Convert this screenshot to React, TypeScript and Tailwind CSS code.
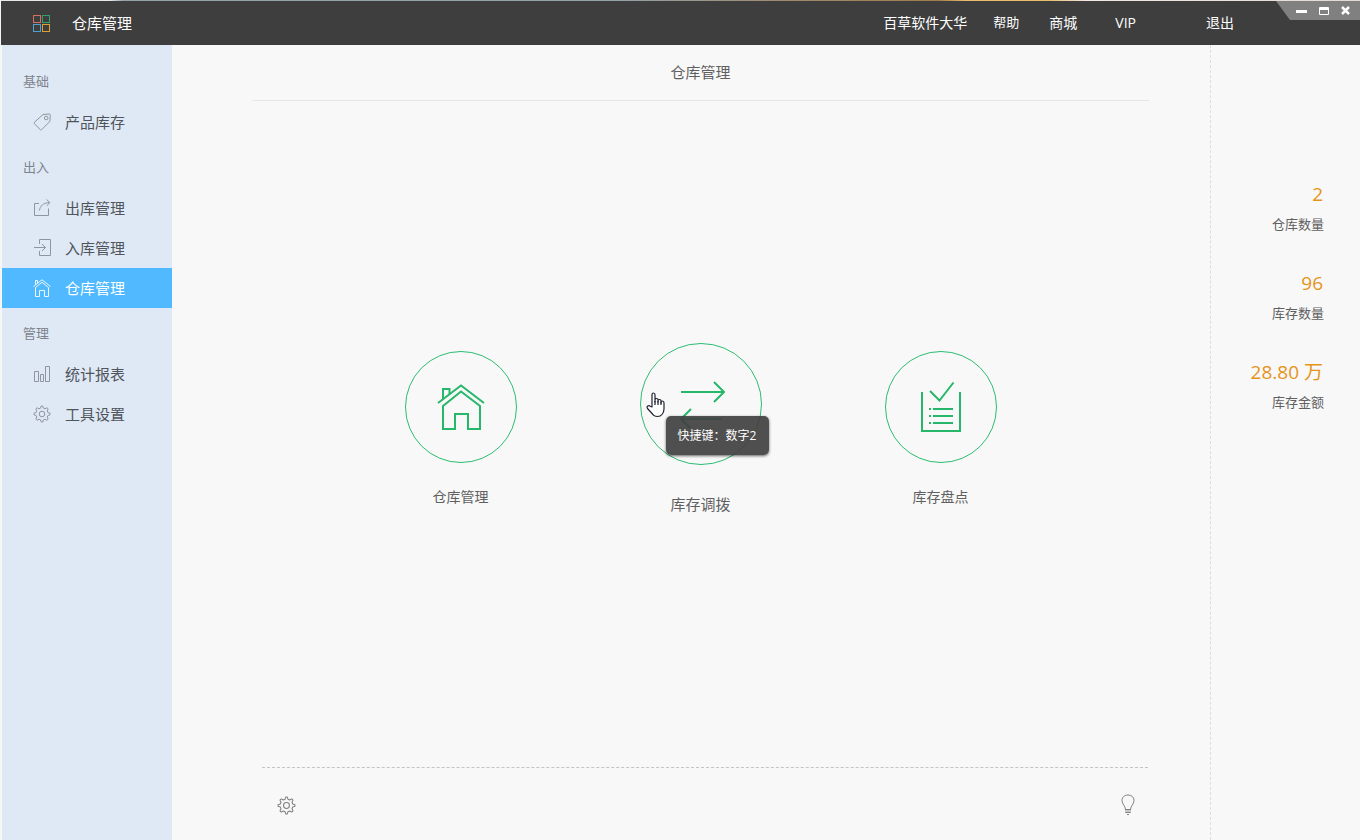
import React from 'react';

type IconProps = { className?: string };

const GEAR_PATH =
  'M8.2 1h1.6l.6 2.1 1.6.7 1.9-1.1 1.3 1.2-1 2 .7 1.6 2.1.7v1.6l-2.1.7-.7 1.6 1 2-1.3 1.2-1.9-1.1-1.6.7-.6 2.1H8.2l-.6-2.1-1.6-.7-1.9 1.1-1.3-1.2 1-2-.7-1.6L1 9.8V8.2l2.1-.7.7-1.6-1-2L4.1 2.7 6 3.8l1.6-.7z';

function TagIcon({ className }: IconProps) {
  return (
    <svg viewBox="0 0 18 18" fill="none" stroke="currentColor" className={className}>
      <path d="M10 1.5L16 1Q17.3 1 17.3 2.2L16.8 8.5 8.5 16.8Q8 17.2 7.5 16.8L1.2 10.5Q.8 10 1.2 9.5z" />
      <circle cx="13.2" cy="5" r="1.8" />
    </svg>
  );
}

function ExportIcon({ className }: IconProps) {
  return (
    <svg viewBox="0 0 18 18" fill="none" stroke="currentColor" className={className}>
      <path d="M6 4.5H1.5v12h14v-7" />
      <path d="M6.5 11.5C7 7 10 4 16.5 3.5M13.5.5l3.3 3L14 6.8" />
    </svg>
  );
}

function ImportIcon({ className }: IconProps) {
  return (
    <svg viewBox="0 0 18 18" fill="none" stroke="currentColor" className={className}>
      <path d="M6.5 5V.5h11v16h-11V12" />
      <path d="M1 8.5h11.5M9 5l3.5 3.5L9 12" />
    </svg>
  );
}

function SmallHouseIcon({ className }: IconProps) {
  return (
    <svg viewBox="0 0 18 18" fill="none" stroke="currentColor" strokeWidth="0.9" className={className}>
      <path d="M.5 7.5L9 .8l8.5 6.7" />
      <path d="M2.5 17.5v-9L9 3.3l6.5 5.2v9h-4v-6h-5v6z" />
      <path d="M2.500 5.5v-4h2V4" />
    </svg>
  );
}

function BarsIcon({ className }: IconProps) {
  return (
    <svg viewBox="0 0 18 18" fill="none" stroke="currentColor" className={className}>
      <path d="M1.5 6.5h4v10h-4zM7.5 9.5h3v7h-3zM12.5 1.5h4v15h-4z" />
    </svg>
  );
}

function GearIcon({ className }: IconProps) {
  return (
    <svg viewBox="0 0 18 18" fill="none" stroke="currentColor" strokeLinejoin="round" className={className}>
      <path d={GEAR_PATH} />
      <circle cx="9" cy="9" r="2.8" />
    </svg>
  );
}

function BulbIcon({ className }: IconProps) {
  return (
    <svg viewBox="0 0 16 22" fill="none" stroke="currentColor" className={className}>
      <path d="M5.5 15.5C5.5 12 2 10.5 2 6.5 2 3 4.5 1 8 1s6 2 6 5.5c0 4-3.5 5.5-3.5 9" />
      <path d="M5 15.5h6V19H5z" fill="currentColor" fillOpacity="0.4" stroke="none" />
      <path d="M5 15.5h6M5.5 18.5h5M7 20.5h2" />
    </svg>
  );
}

function HouseIcon({ className }: IconProps) {
  return (
    <svg viewBox="0 0 48 48" fill="none" stroke="currentColor" strokeWidth="2" className={className}>
      <path d="M1 20L24 2.5 47 20" />
      <path d="M6 46V23L24 8.5 43 23v23H31V31H18v15z" />
      <path d="M6 16.5V6h6.5v5" />
    </svg>
  );
}

function TransferIcon({ className }: IconProps) {
  return (
    <svg viewBox="0 0 48 48" fill="none" stroke="currentColor" strokeWidth="2" className={className}>
      <path d="M4 12h42M37 2l10 10-10 10" />
      <path d="M5 39h40M14 29L4 39l10 10" />
    </svg>
  );
}

function CheckListIcon({ className }: IconProps) {
  return (
    <svg viewBox="0 0 52 52" fill="none" stroke="currentColor" strokeWidth="2" className={className}>
      <path d="M7 11v39h38V11" />
      <path d="M15 10l9.5 9.5 14-18" />
      <path d="M14 28h2M18 28h20M14 35h2M18 35h20M14 42h2M18 42h20" />
    </svg>
  );
}

function HandCursor({ className }: IconProps) {
  return (
    <svg viewBox="0 0 20 26" fill="#fff" stroke="#1f2230" strokeWidth="1.2" strokeLinejoin="round" className={className}>
      <path d="M6 15V3Q6 1 7.5 1T9 3v7-2q0-1.500 1.500-1.500T12 8v2-1q0-1.500 1.500-1.500T15 9v2-.5Q15 9 16.500 9T18 11v6q0 3-2 5.500Q14.500 24.500 11.500 24.500 8 24.500 6.500 22L1.500 16.500Q.5 15 1.800 14T4 14.200z" />
      <path d="M9 9v4M12 9v4M15 10v3" fill="none" />
    </svg>
  );
}

const menuGroups = [
  { title: '基础', items: [{ label: '产品库存', icon: TagIcon }] },
  {
    title: '出入',
    items: [
      { label: '出库管理', icon: ExportIcon },
      { label: '入库管理', icon: ImportIcon },
      { label: '仓库管理', icon: SmallHouseIcon, active: true },
    ],
  },
  {
    title: '管理',
    items: [
      { label: '统计报表', icon: BarsIcon },
      { label: '工具设置', icon: GearIcon },
    ],
  },
];

const topLinks = [
  { label: '百草软件大华', style: 'text-sm' },
  { label: '帮助', style: 'ml-[26px] text-[13px]' },
  { label: '商城', style: 'ml-[30px] text-sm' },
  { label: 'VIP', style: 'ml-[38px] text-sm' },
  { label: '退出', style: 'ml-[70px] text-sm' },
];

const stats = [
  { value: '2', label: '仓库数量' },
  { value: '96', label: '库存数量' },
  { value: '28.80 万', label: '库存金额' },
];

function TopBar() {
  return (
    <header className="relative flex h-11 shrink-0 items-center bg-[#3e3e3e] pl-8 pr-[126px] text-white">
      <div className="grid grid-cols-2 gap-px">
        <span className="size-2 border border-[#d8705f]" />
        <span className="size-2 border border-[#2ea36b]" />
        <span className="size-2 border border-[#4e9fd6]" />
        <span className="size-2 border border-[#e0a030]" />
      </div>
      <span className="ml-[22px] text-[15px]">仓库管理</span>
      <nav className="ml-auto flex items-center">
        {topLinks.map((link) => (
          <a key={link.label} href="#" className={link.style}>
            {link.label}
          </a>
        ))}
      </nav>
      <div className="absolute right-0 top-0 flex h-[19px] w-[84px] items-center justify-end gap-[10px] bg-[#808080] pr-[9px] [clip-path:polygon(0_0,100%_0,100%_100%,14px_100%)]">
        <button aria-label="最小化">
          <svg viewBox="0 0 13 12" className="h-3 w-[13px]" fill="#fff">
            <path d="M1 5h11v3H1z" />
          </svg>
        </button>
        <button aria-label="最大化">
          <svg viewBox="0 0 13 12" className="h-3 w-[13px]" fill="none" stroke="#fff">
            <path d="M1.5 2.5h9v7h-9zM1 3.5h10M1 4.5h10" />
          </svg>
        </button>
        <button aria-label="关闭">
          <svg viewBox="0 0 10 12" className="h-3 w-[10px]" fill="none" stroke="#fff" strokeWidth="2.5">
            <path d="M1 2l7 7M8 2L1 9" />
          </svg>
        </button>
      </div>
    </header>
  );
}

function Sidebar() {
  return (
    <aside className="ml-px w-[170px] shrink-0 bg-[#dfe9f5] pt-[11px]">
      {menuGroups.map((group) => (
        <section key={group.title} className="pt-[6px]">
          <h2 className="flex h-10 items-center pl-[21px] text-[13px] text-[#7d838c]">{group.title}</h2>
          {group.items.map((item) => (
            <a
              key={item.label}
              href="#"
              className={`flex h-10 items-center gap-[14px] pl-[31px] text-[15px] ${
                item.active ? 'bg-[#50b9ff] text-white' : 'text-[#50555c]'
              }`}
            >
              <item.icon className={`size-[18px] ${item.active ? 'text-white' : 'text-[#8f959c]'}`} />
              {item.label}
            </a>
          ))}
        </section>
      ))}
    </aside>
  );
}

function Content() {
  return (
    <main className="flex min-w-0 flex-1 flex-col pl-20 pr-[61px] text-[#606060]">
      <h1 className="flex h-14 shrink-0 items-center justify-center border-b border-[#e6e6e6] text-[15px]">
        仓库管理
      </h1>
      <div className="flex flex-1 items-center justify-center pb-[10px]">
        <div className="grid w-full max-w-[720px] grid-cols-3 items-center">
          <button className="flex flex-col items-center gap-6">
            <span className="flex size-28 items-center justify-center rounded-full border border-[#2dbd71] text-[#27b76b]">
              <HouseIcon className="size-12" />
            </span>
            <span className="text-sm">仓库管理</span>
          </button>
          {/* hovered entry: enlarged, with its shortcut hint */}
          <button className="flex flex-col items-center gap-7">
            <span className="relative flex size-[122px] items-center justify-center rounded-full border border-[#2dbd71] text-[#27b76b]">
              <TransferIcon className="size-12" />
              <span
                role="tooltip"
                className="absolute left-[25px] top-[72px] flex h-[39px] w-[103px] items-center justify-center whitespace-nowrap rounded-[5px] bg-[#404040]/92 text-xs text-white shadow-[0_1px_3px_rgba(0,0,0,0.6)]"
              >
                快捷键：数字2
              </span>
              <HandCursor className="absolute left-[5px] top-12 h-[26px] w-5" />
            </span>
            <span className="text-[15px] leading-[22px]">库存调拨</span>
          </button>
          <button className="flex flex-col items-center gap-6">
            <span className="flex size-28 items-center justify-center rounded-full border border-[#2dbd71] text-[#27b76b]">
              <CheckListIcon className="size-[52px]" />
            </span>
            <span className="text-sm">库存盘点</span>
          </button>
        </div>
      </div>
      <footer className="ml-[10px] mr-px flex h-[73px] shrink-0 items-center justify-between border-t border-dashed border-[#c4c4c4] pl-[15px] pr-3 pt-[2px] text-[#808080]">
        <button aria-label="设置">
          <GearIcon className="size-[19px]" />
        </button>
        <button aria-label="提示">
          <BulbIcon className="h-[22px] w-4" />
        </button>
      </footer>
    </main>
  );
}

function StatsPanel() {
  return (
    <aside className="w-[150px] shrink-0 border-l border-dashed border-[#dcdcdc] pr-9 pt-[134px] text-right">
      <dl className="flex flex-col gap-[29px]">
        {stats.map((stat) => (
          <div key={stat.label} className="flex flex-col-reverse">
            <dt className="text-[13px] leading-[30px] text-[#606060]">{stat.label}</dt>
            <dd className="pr-px text-[19px] leading-[30px] text-[#e5941a]">{stat.value}</dd>
          </div>
        ))}
      </dl>
    </aside>
  );
}

export default function App() {
  return (
    <div className="flex min-h-screen flex-col border-l border-[#f4f4f6] bg-[#f8f8f8] font-['Open_Sans','Noto_Sans_CJK_SC',sans-serif]">
      {/* sliver of the desktop behind the window */}
      <div className="h-px shrink-0 bg-[linear-gradient(to_right,#e8e8e8_0_8%,#93a3a9_9%_45%,#a08a6c_58%,#a07c4c_69%,#e8bd6c_71%_77%,#f0e8e4_80%,#e4d8d6)]" />
      <TopBar />
      <div className="flex flex-1">
        <Sidebar />
        <Content />
        <StatsPanel />
      </div>
    </div>
  );
}
